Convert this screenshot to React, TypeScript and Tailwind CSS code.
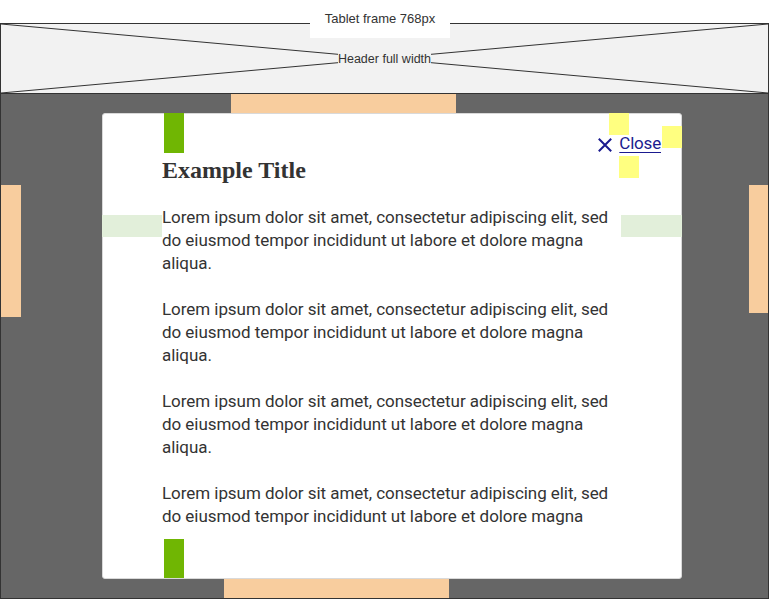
import React from "react";

const para =
  "Lorem ipsum dolor sit amet, consectetur adipiscing elit, sed do eiusmod tempor incididunt ut labore et dolore magna aliqua.";

export default function App() {
  return (
    <div className="relative w-[769px] h-[599px] overflow-hidden bg-white font-[family-name:'Liberation_Sans',Arial,sans-serif]">
      {/* frame label */}
      <div className="absolute left-[310px] top-0 z-20 flex h-[38px] w-[140px] items-center justify-center bg-white text-[13px] text-[#333]">
        Tablet frame 768px
      </div>

      {/* frame */}
      <div className="mt-[23px] flex h-[576px] w-[769px] flex-col border border-[#333]">
        {/* header */}
        <div className="relative flex h-[70px] shrink-0 items-center justify-center border-b border-[#333] bg-[#f2f2f2]">
          <svg
            className="absolute inset-0 h-full w-full"
            viewBox="0 0 100 100"
            preserveAspectRatio="none"
          >
            <line x1="0" y1="0" x2="100" y2="100" stroke="#333" strokeWidth="1" vectorEffect="non-scaling-stroke" />
            <line x1="0" y1="100" x2="100" y2="0" stroke="#333" strokeWidth="1" vectorEffect="non-scaling-stroke" />
          </svg>
          <span className="relative bg-[#f2f2f2] text-[12.5px] leading-[14px] text-[#333]">
            Header full width
          </span>
        </div>

        {/* page body */}
        <div className="relative flex-1 bg-[#666666]">
          {/* spacing markers */}
          <div className="absolute left-[230px] top-0 h-[19px] w-[225px] bg-[#f8cd9e]" />
          <div className="absolute bottom-0 left-[223px] h-[19px] w-[225px] bg-[#f8cd9e]" />
          <div className="absolute left-0 top-[91px] h-[132px] w-[20px] bg-[#f8cd9e]" />
          <div className="absolute right-0 top-[91px] h-[128px] w-[19px] bg-[#f8cd9e]" />

          {/* modal */}
          <div className="relative ml-[101px] mt-[19px] h-[466px] w-[580px] rounded-[3px] border border-[#d9d9d9] bg-white">
            <div className="pl-[59px] pr-[60px] pt-[39px]">
              <div className="h-[377px] overflow-hidden text-[#333]">
                <h1 className="mb-[18px] font-[family-name:'Liberation_Serif',serif] text-[24px] font-bold leading-[35px]">
                  Example Title
                </h1>
                {[0, 1, 2, 3].map((i) => (
                  <p
                    key={i}
                    className="mb-[23px] font-[family-name:Roboto,sans-serif] text-[17px] leading-[23px] tracking-[-0.05px]"
                  >
                    {para}
                  </p>
                ))}
              </div>
            </div>

            {/* close link */}
            <a
              href="#"
              className="absolute right-[20px] top-[21px] flex h-[21px] items-start gap-[7px] text-[#1a1a8f]"
            >
              <svg width="14" height="14" viewBox="0 0 14 14" className="mt-[3px]">
                <path d="M0.8 0.8 L13.2 13.2 M13.2 0.8 L0.8 13.2" stroke="currentColor" strokeWidth="2" fill="none" />
              </svg>
              <span className="font-[family-name:Roboto,sans-serif] text-[17px] leading-[17px] tracking-[-0.2px] underline underline-offset-[3px]">
                Close
              </span>
            </a>

            {/* annotation markers */}
            <div className="absolute left-[61px] top-[-1px] h-[40px] w-[20px] bg-[#70b603]" />
            <div className="absolute bottom-0 left-[61px] h-[39px] w-[20px] bg-[#70b603]" />
            <div className="absolute left-[-1px] top-[101px] h-[22px] w-[60px] bg-[#e2efda]" />
            <div className="absolute right-[-1px] top-[101px] h-[22px] w-[61px] bg-[#e2efda]" />
            <div className="absolute left-[506px] top-[-1px] h-[22px] w-[20px] bg-[#ffff80]" />
            <div className="absolute left-[559px] top-[12px] h-[22px] w-[20px] bg-[#ffff80]" />
            <div className="absolute left-[516px] top-[42px] h-[22px] w-[20px] bg-[#ffff80]" />
          </div>
        </div>
      </div>
    </div>
  );
}
